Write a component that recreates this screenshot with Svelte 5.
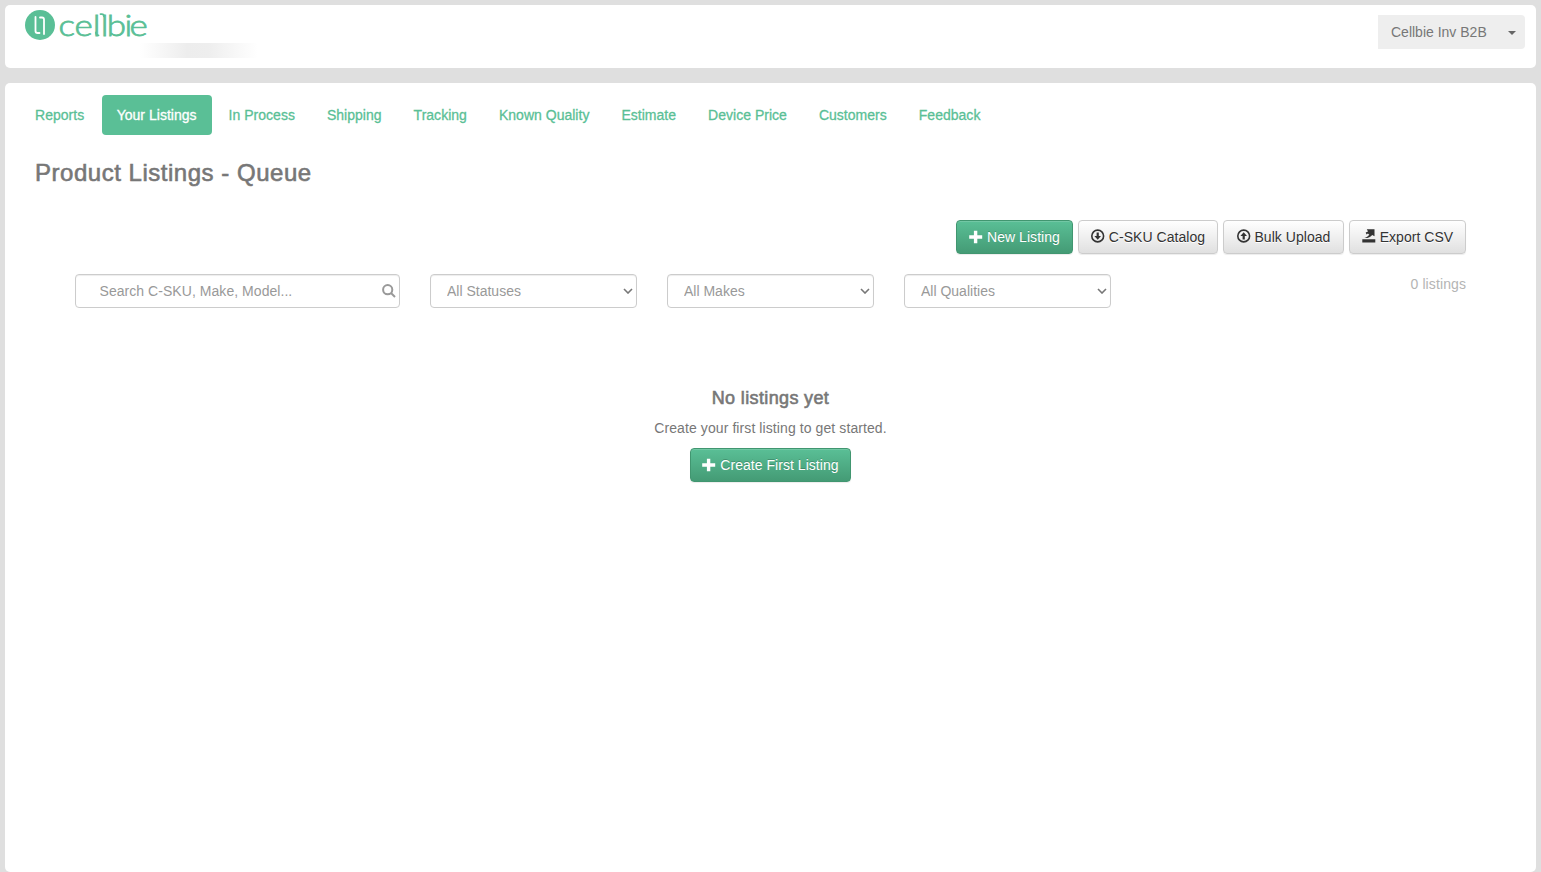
<script>
  const tabs = [
    "Reports",
    "Your Listings",
    "In Process",
    "Shipping",
    "Tracking",
    "Known Quality",
    "Estimate",
    "Device Price",
    "Customers",
    "Feedback",
  ];
  const filters = ["All Statuses", "All Makes", "All Qualities"];
  let activeTab = "Your Listings";
  let search = "";
</script>

{#snippet plus()}
  <svg class="icon" viewBox="0 0 14 14"
    ><path d="M4.9 .7h3.400v4.600h4.900v3.400H8.300v4.600H4.900V8.700H.2V5.300h4.700z" /></svg
  >
{/snippet}

{#snippet circleArrow(up)}
  <svg class="icon circle-icon" viewBox="0 0 14 14">
    <circle class="ring" cx="6.700" cy="7" r="5.9" />
    <path
      d="M5.6 3.5h2.200v3.400h2.200L6.700 10.700 3.400 6.900h2.200z"
      transform={up ? "rotate(180 6.7 7)" : undefined}
    />
  </svg>
{/snippet}

<header class="panel top">
  <div class="brand">
    <svg class="logo" width="126" height="34" viewBox="0 0 126 34">
      <circle cx="16" cy="16" r="15" />
      <path class="mark" d="M11.5 8v14a2 2 0 0 0 2 2h2M16 8.5h2a2 2 0 0 1 2 2V25" />
      <text transform="scale(1.13 .95)" x="30.5 44.600 60.9 67.900 73.300 88.900 93.400" y="28.1"
        >cellbie</text
      >
      <path class="hook" d="M71.900 23.500c0 2 .8 2.800 2.600 2.800M76.500 5.100h1.200c1.400 0 2.200.8 2.200 2.200" />
    </svg>
    <div class="smudge"></div>
  </div>
  <button class="account">Cellbie Inv B2B <span class="caret"></span></button>
</header>

<main class="panel content">
  <nav>
    {#each tabs as tab}
      <button
        class="tab"
        class:active={tab === activeTab}
        on:click={() => (activeTab = tab)}>{tab}</button
      >
    {/each}
  </nav>

  <h1>Product Listings - Queue</h1>

  <div class="actions">
    <button class="btn primary" style:width="117px">{@render plus()} New Listing</button>
    <button class="btn" style:width="140px">{@render circleArrow(false)} C-SKU Catalog</button>
    <button class="btn" style:width="121px">{@render circleArrow(true)} Bulk Upload</button>
    <button class="btn" style:width="117px"
      ><svg class="icon export-icon" viewBox="0 0 14 14"
        ><path
          d="M.3 10.200h13v3.300H.3zM2.300 9c2.200-.6 3.800-1.700 5-3.200L5.900 4.600 4.500 5.500 3.700 3.500 6 2.600 4.800.2h7.700v7L10.200 5.900C8.600 8 6.500 9.100 2.300 9z"
        /></svg
      > Export CSV</button
    >
  </div>

  <div class="filters">
    <div class="search">
      <input placeholder="Search C-SKU, Make, Model..." bind:value={search} />
      <svg viewBox="0 0 14 14"
        ><circle cx="5.700" cy="5.700" r="4.600" /><path d="M9 9l4 4" /></svg
      >
    </div>
    {#each filters as filter}
      <div class="select">
        <select><option>{filter}</option></select>
        <svg viewBox="0 0 10 6"><path d="M1 1l4 4 4-4" /></svg>
      </div>
    {/each}
    <span class="count">0 listings</span>
  </div>

  <section class="empty">
    <h2>No listings yet</h2>
    <p>Create your first listing to get started.</p>
    <button class="btn primary" style:width="161px">{@render plus()} Create First Listing</button>
  </section>
</main>

<style>
  :global(body) {
    background: #dfdfdf;
    color: #777;
    font: 14px/20px "Liberation Sans", Arial, sans-serif;
  }

  :global(#app) {
    box-sizing: border-box;
    height: 872px;
    padding: 5px 5px 0;
    display: flex;
    flex-direction: column;
    gap: 15px;
  }

  button,
  input,
  select {
    font: inherit;
    box-sizing: border-box;
  }

  .panel {
    background: #fff;
    border-radius: 5px;
    box-sizing: border-box;
  }

  .top {
    height: 63px;
    display: flex;
    justify-content: space-between;
    padding: 4px 11px 0 19px;
  }

  .logo {
    display: block;
    overflow: visible;
    fill: #5abf96;
  }

  .logo text {
    font: 300 31px Lato, sans-serif;
    stroke: #5abf96;
    stroke-width: 0.8;
  }

  .logo path {
    fill: none;
    stroke-width: 1.8;
    stroke-linecap: round;
  }

  .mark {
    stroke: #fff;
  }

  .hook {
    stroke: #5abf96;
  }

  .smudge {
    width: 118px;
    height: 15px;
    margin-left: 116px;
    background: linear-gradient(90deg, #fff, #ededed 40%, #eee 58%, #fff);
  }

  .account {
    width: 147px;
    height: 34px;
    margin-top: 6px;
    padding: 0 9px 0 13px;
    border: 0;
    border-radius: 0 4px 4px 0;
    background: #eee;
    color: #777;
    display: flex;
    align-items: center;
    justify-content: space-between;
  }

  .caret {
    border: 4px solid transparent;
    border-top-color: #666;
    border-bottom: 0;
    margin-top: 2px;
  }

  .content {
    flex: 1;
    padding: 12px 15px 0;
  }

  nav {
    display: flex;
    gap: 2px;
  }

  .tab {
    height: 40px;
    padding: 0 15px;
    border: 0;
    border-radius: 4px;
    background: none;
    color: #5abf96;
    letter-spacing: 0.02px;
    -webkit-text-stroke: 0.3px;
    white-space: nowrap;
  }

  .tab:first-child {
    padding-right: 15.5px;
  }

  .tab.active {
    background: #5abf96;
    color: #fff;
  }

  h1,
  h2 {
    font-weight: normal;
    -webkit-text-stroke: 0.6px;
  }

  h1 {
    margin: 25px 15px 0;
    font-size: 24px;
    line-height: 26px;
    letter-spacing: 0.52px;
  }

  .actions {
    display: flex;
    justify-content: flex-end;
    gap: 5px;
    margin: 34px 55px 0 0;
  }

  .btn {
    height: 34px;
    padding: 0;
    border: 1px solid #ccc;
    border-radius: 4px;
    background: linear-gradient(#fff, #e0e0e0);
    box-shadow:
      inset 0 1px 0 rgba(255, 255, 255, 0.15),
      0 1px 1px rgba(0, 0, 0, 0.075);
    color: #333;
    letter-spacing: 0.04px;
    text-shadow: 0 1px 0 #fff;
    white-space: nowrap;
  }

  .primary {
    border-color: #419670;
    background: linear-gradient(#5abf96, #449b75);
    color: #fff;
    text-shadow: 0 -1px 0 rgba(0, 0, 0, 0.2);
  }

  .icon {
    width: 14px;
    height: 14px;
    fill: currentColor;
    vertical-align: -2px;
  }

  .circle-icon,
  .export-icon {
    vertical-align: -1px;
  }

  .ring {
    fill: none;
    stroke: currentColor;
    stroke-width: 1.6;
  }

  .filters {
    display: flex;
    gap: 30px;
    margin: 20px 55px 0;
  }

  .search,
  .select {
    position: relative;
    width: 207px;
  }

  .search {
    width: 325px;
  }

  input,
  select {
    appearance: none;
    display: block;
    width: 100%;
    height: 34px;
    padding: 0 16px;
    border: 1px solid #ccc;
    border-radius: 4px;
    background: #fff;
    box-shadow: inset 0 1px 1px rgba(0, 0, 0, 0.075);
    color: #999;
  }

  input {
    padding: 0 23.5px;
    letter-spacing: 0.05px;
  }

  input::placeholder {
    color: #999;
  }

  .filters svg {
    position: absolute;
    fill: none;
    stroke: #999;
    pointer-events: none;
  }

  .search svg {
    width: 14px;
    right: 4px;
    top: 10px;
    stroke: #999;
    stroke-width: 2;
  }

  .select svg {
    width: 10px;
    right: 4px;
    top: 14px;
    stroke: #777;
    stroke-width: 1.6;
  }

  .count {
    margin-left: auto;
    color: #b4b4b4;
    letter-spacing: 0.1px;
  }

  .empty {
    margin-top: 80px;
    display: flex;
    flex-direction: column;
    align-items: center;
  }

  h2 {
    margin: 0;
    font-size: 18px;
    letter-spacing: 0.36px;
  }

  p {
    margin: 10px 0;
    letter-spacing: 0.09px;
  }
</style>
